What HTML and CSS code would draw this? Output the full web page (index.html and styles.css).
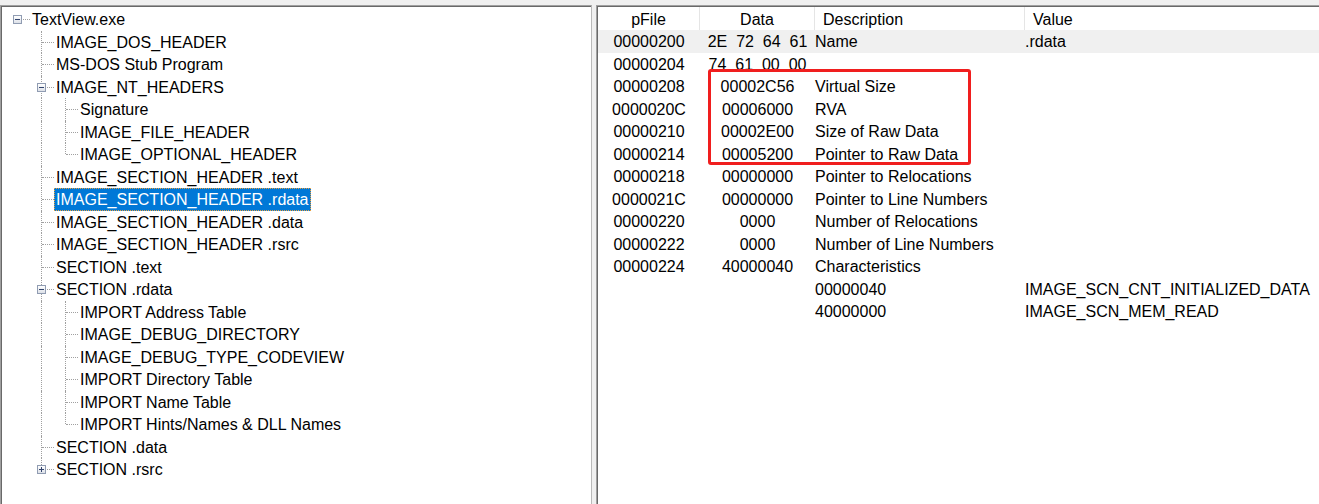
FILE: index.html
```html
<!DOCTYPE html>
<html>
<head>
<meta charset="utf-8">
<title>TextView.exe</title>
<link rel="stylesheet" href="styles.css">
</head>
<body>
<div class="app">
  <div class="pane left">
    <div class="tree">
      <div class="row"><span class="c h"><i class="box"></i></span><span class="lbl">TextView.exe</span></div>
      <div class="row"><span class="c"></span><span class="c v h"></span><span class="lbl">IMAGE_DOS_HEADER</span></div>
      <div class="row"><span class="c"></span><span class="c v h"></span><span class="lbl">MS-DOS Stub Program</span></div>
      <div class="row"><span class="c"></span><span class="c v h"><i class="box"></i></span><span class="lbl">IMAGE_NT_HEADERS</span></div>
      <div class="row"><span class="c"></span><span class="c v"></span><span class="c v h"></span><span class="lbl">Signature</span></div>
      <div class="row"><span class="c"></span><span class="c v"></span><span class="c v h"></span><span class="lbl">IMAGE_FILE_HEADER</span></div>
      <div class="row"><span class="c"></span><span class="c v"></span><span class="c vt h"></span><span class="lbl">IMAGE_OPTIONAL_HEADER</span></div>
      <div class="row"><span class="c"></span><span class="c v h"></span><span class="lbl">IMAGE_SECTION_HEADER .text</span></div>
      <div class="row"><span class="c"></span><span class="c v h"></span><span class="lbl sel">IMAGE_SECTION_HEADER .rdata</span></div>
      <div class="row"><span class="c"></span><span class="c v h"></span><span class="lbl">IMAGE_SECTION_HEADER .data</span></div>
      <div class="row"><span class="c"></span><span class="c v h"></span><span class="lbl">IMAGE_SECTION_HEADER .rsrc</span></div>
      <div class="row"><span class="c"></span><span class="c v h"></span><span class="lbl">SECTION .text</span></div>
      <div class="row"><span class="c"></span><span class="c v h"><i class="box"></i></span><span class="lbl">SECTION .rdata</span></div>
      <div class="row"><span class="c"></span><span class="c v"></span><span class="c v h"></span><span class="lbl">IMPORT Address Table</span></div>
      <div class="row"><span class="c"></span><span class="c v"></span><span class="c v h"></span><span class="lbl">IMAGE_DEBUG_DIRECTORY</span></div>
      <div class="row"><span class="c"></span><span class="c v"></span><span class="c v h"></span><span class="lbl">IMAGE_DEBUG_TYPE_CODEVIEW</span></div>
      <div class="row"><span class="c"></span><span class="c v"></span><span class="c v h"></span><span class="lbl">IMPORT Directory Table</span></div>
      <div class="row"><span class="c"></span><span class="c v"></span><span class="c v h"></span><span class="lbl">IMPORT Name Table</span></div>
      <div class="row"><span class="c"></span><span class="c v"></span><span class="c vt h"></span><span class="lbl">IMPORT Hints/Names &amp; DLL Names</span></div>
      <div class="row"><span class="c"></span><span class="c v h"></span><span class="lbl">SECTION .data</span></div>
      <div class="row"><span class="c"></span><span class="c vt h"><i class="box plus"></i></span><span class="lbl">SECTION .rsrc</span></div>
    </div>
  </div>
  <div class="pane right">
    <div class="trow head">
      <div class="hc ctr">pFile</div>
      <div class="hc ctr">Data</div>
      <div class="hc">Description</div>
      <div class="hc last">Value</div>
    </div>
    <div class="trow hot"><div class="ctr">00000200</div><div class="ctr pre">2E  72  64  61</div><div>Name</div><div>.rdata</div></div>
    <div class="trow"><div class="ctr">00000204</div><div class="ctr pre">74  61  00  00</div><div></div><div></div></div>
    <div class="trow"><div class="ctr">00000208</div><div class="ctr">00002C56</div><div>Virtual Size</div><div></div></div>
    <div class="trow"><div class="ctr">0000020C</div><div class="ctr">00006000</div><div>RVA</div><div></div></div>
    <div class="trow"><div class="ctr">00000210</div><div class="ctr">00002E00</div><div>Size of Raw Data</div><div></div></div>
    <div class="trow"><div class="ctr">00000214</div><div class="ctr">00005200</div><div>Pointer to Raw Data</div><div></div></div>
    <div class="trow"><div class="ctr">00000218</div><div class="ctr">00000000</div><div>Pointer to Relocations</div><div></div></div>
    <div class="trow"><div class="ctr">0000021C</div><div class="ctr">00000000</div><div>Pointer to Line Numbers</div><div></div></div>
    <div class="trow"><div class="ctr">00000220</div><div class="ctr">0000</div><div>Number of Relocations</div><div></div></div>
    <div class="trow"><div class="ctr">00000222</div><div class="ctr">0000</div><div>Number of Line Numbers</div><div></div></div>
    <div class="trow"><div class="ctr">00000224</div><div class="ctr">40000040</div><div>Characteristics</div><div></div></div>
    <div class="trow"><div></div><div></div><div>00000040</div><div>IMAGE_SCN_CNT_INITIALIZED_DATA</div></div>
    <div class="trow"><div></div><div></div><div>40000000</div><div>IMAGE_SCN_MEM_READ</div></div>
    <div class="mark"></div>
  </div>
</div>
</body>
</html>
```

FILE: styles.css
```css
html, body {
  margin: 0;
  padding: 0;
}
body {
  background: #f0f0f0;
  font-family: "Liberation Sans", Arial, sans-serif;
  font-size: 16px;
  color: #000;
  overflow: hidden;
}
.app {
  display: flex;
  gap: 4px;
  padding-top: 5px;
  height: 504px;
  box-sizing: border-box;
}
.pane {
  background: #fff;
  border-top: 1px solid #a0a0a0;
  border-left: 1px solid #a0a0a0;
  box-shadow: inset 1px 1px 0 #696969;
  height: 520px;
  box-sizing: border-box;
  overflow: hidden;
}
.left {
  width: 592px;
  flex: none;
  border-right: 1px solid #b9b9b9;
  padding: 2px 0 0 5px;
}
.right {
  flex: 1;
  position: relative;
  padding-top: 1px;
  padding-left: 1px;
}

/* tree */
.tree {
  display: flex;
  flex-direction: column;
}
.row {
  display: flex;
  height: 22.5px;
}
.c {
  width: 24px;
  flex: none;
  position: relative;
}
.c.v::before,
.c.vt::before {
  content: "";
  position: absolute;
  left: 11px;
  top: 0;
  bottom: 0;
  border-left: 1px dotted #a0a0a0;
}
.c.vt::before {
  bottom: auto;
  height: 11px;
}
.c.h::after {
  content: "";
  position: absolute;
  left: 12px;
  right: 0;
  top: 11px;
  border-top: 1px dotted #a0a0a0;
}
.box {
  position: absolute;
  left: 7px;
  top: 7px;
  width: 9px;
  height: 9px;
  box-sizing: border-box;
  border: 1px solid #909cb2;
  background: linear-gradient(#ffffff, #dde1e8);
  z-index: 2;
}
.box::before {
  content: "";
  position: absolute;
  left: 1px;
  top: 3px;
  width: 5px;
  height: 1px;
  background: #33456e;
}
.box.plus::after {
  content: "";
  position: absolute;
  left: 3px;
  top: 1px;
  width: 1px;
  height: 5px;
  background: #33456e;
}
.lbl {
  padding: 0 2px;
  height: 22.5px;
  line-height: 24.5px;
  white-space: nowrap;
}
.lbl.sel {
  background: #0078d7;
  color: #fff;
  outline: 1px dotted #e8a040;
  outline-offset: -1px;
}

/* list view */
.trow {
  display: grid;
  grid-template-columns: 102px 115px 210px 1fr;
  height: 22.5px;
  line-height: 24.5px;
  white-space: nowrap;
}
.trow.head {
  height: 23px;
  line-height: 21px;
  padding-top: 2px;
  box-sizing: border-box;
}
.hc {
  border-right: 1px solid #e5e5e5;
  padding-left: 8px;
  margin-top: -2px;
  padding-top: 2px;
}
.hc.ctr {
  padding-left: 0;
}
.hc.last {
  border-right: none;
}
.ctr {
  text-align: center;
}
.pre {
  white-space: pre;
}
.trow.hot {
  background: #f0f0f0;
}
.mark {
  position: absolute;
  left: 111px;
  top: 63px;
  width: 263px;
  height: 96px;
  box-sizing: border-box;
  border: 3px solid #f01e1e;
  border-radius: 3px;
}
```
